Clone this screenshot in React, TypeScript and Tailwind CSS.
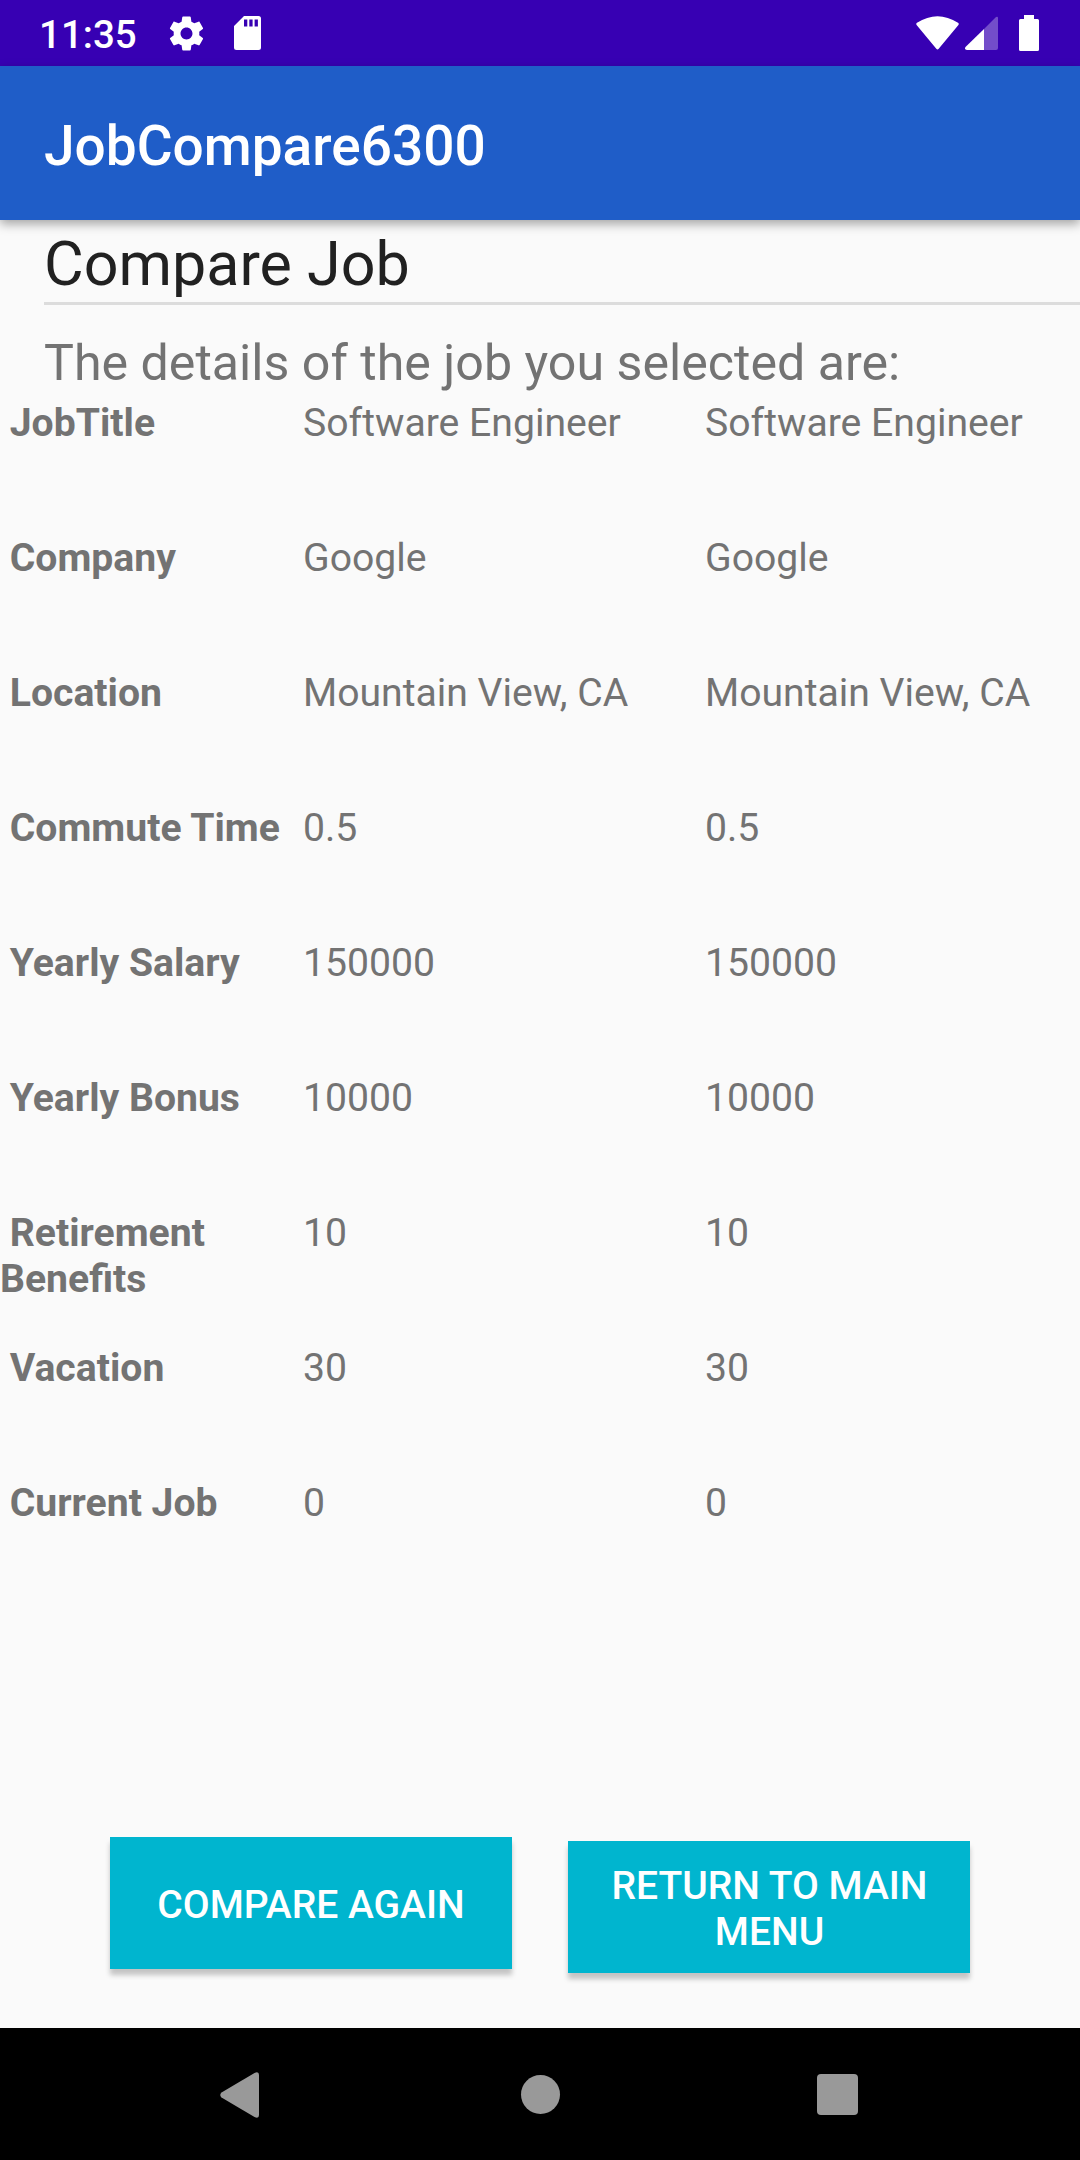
const rows: { label: string; values: [string, string] }[] = [
  { label: "JobTitle", values: ["Software Engineer", "Software Engineer"] },
  { label: "Company", values: ["Google", "Google"] },
  { label: "Location", values: ["Mountain View, CA", "Mountain View, CA"] },
  { label: "Commute Time", values: ["0.5", "0.5"] },
  { label: "Yearly Salary", values: ["150000", "150000"] },
  { label: "Yearly Bonus", values: ["10000", "10000"] },
  { label: "Retirement Benefits", values: ["10", "10"] },
  { label: "Vacation", values: ["30", "30"] },
  { label: "Current Job", values: ["0", "0"] },
];

function StatusBar() {
  return (
    <div className="flex h-[66px] shrink-0 items-center bg-[#3700b3] pr-[41px] pl-[39px] text-white">
      <span className="w-[127px] pt-[3px] text-[38.5px] leading-[46px] font-medium">11:35</span>
      <svg className="size-[41px]" viewBox="0 0 24 24" fill="currentColor">
        <path d="M19.43 12.98c.04-.32.07-.64.07-.98s-.03-.66-.07-.98l2.11-1.65c.19-.15.24-.42.12-.64l-2-3.46c-.12-.22-.39-.3-.61-.22l-2.49 1c-.52-.4-1.08-.73-1.69-.98l-.38-2.65C14.46 2.18 14.25 2 14 2h-4c-.25 0-.46.18-.49.42l-.38 2.65c-.61.25-1.17.59-1.69.98l-2.49-1c-.23-.09-.49 0-.61.22l-2 3.46c-.13.22-.07.49.12.64l2.11 1.65c-.04.32-.07.65-.07.98s.03.66.07.98l-2.11 1.65c-.19.15-.24.42-.12.64l2 3.46c.12.22.39.3.61.22l2.49-1c.52.4 1.08.73 1.69.98l.38 2.65c.03.24.24.42.49.42h4c.25 0 .46-.18.49-.42l.38-2.65c.61-.25 1.17-.59 1.69-.98l2.49 1c.23.09.49 0 .61-.22l2-3.46c.12-.22.07-.49-.12-.64l-2.11-1.65zM12 15.5c-1.93 0-3.5-1.57-3.5-3.5s1.57-3.5 3.5-3.5 3.5 1.57 3.5 3.5-1.57 3.5-3.5 3.5z" />
      </svg>
      <svg className="ml-[27px] h-[34px] w-[27px]" viewBox="0 0 27 34" fill="currentColor">
        <path fillRule="evenodd" d="M10 0H24.5Q27 0 27 2.500V31.500Q27 34 24.500 34H2.500Q0 34 0 31.500V10ZM10 3.500V10.500H13.300V3.500ZM15.300 3.500V10.500H18.600V3.500ZM20.600 3.500V10.500H23.900V3.500Z" />
      </svg>
      <svg className="ml-auto h-[34px] w-[43px]" viewBox="0 0 43 34" fill="currentColor">
        <path d="M1 9.500Q-.5 8 1 6.800Q21.500 -6.500 42 6.800Q43.500 8 42 9.500L22.700 32.800Q21.500 34 20.300 32.800Z" />
      </svg>
      <svg className="ml-[6px] h-[34px] w-[33px]" viewBox="0 0 33 34" fill="currentColor">
        <path opacity=".3" d="M19 13 31 1Q33 0 33 2V32Q33 34 31 34H19Z" />
        <path d="M19 13V34H2Q-1 33.500 .5 31Z" />
      </svg>
      <svg className="ml-[21px] h-[36px] w-[20px]" viewBox="0 0 20 36" fill="currentColor">
        <path d="M5 0H15V4H18.500Q20 4 20 5.500V34.500Q20 36 18.500 36H1.500Q0 36 0 34.500V5.500Q0 4 1.500 4H5Z" />
      </svg>
    </div>
  );
}

function AppBar() {
  return (
    <header className="z-10 flex h-[154px] shrink-0 items-center bg-[#1f5dc8] px-[44px] pt-[5px] shadow-[0_4px_10px_rgba(0,0,0,0.35)]">
      <h1 className="text-[55px] leading-[64px] font-medium text-white">JobCompare6300</h1>
    </header>
  );
}

function NavBar() {
  return (
    <nav className="flex h-[132px] shrink-0 items-center justify-between bg-black pr-[222px] pl-[220px] text-[#999]">
      <svg className="mt-px h-[46px] w-[39px]" viewBox="0 0 39 46" fill="currentColor">
        <path d="M1.500 20.500 34.500 1Q39 -1 39 3V43Q39 47 34.500 45L1.500 25.500Q-1 23 1.500 20.500Z" />
      </svg>
      <span className="mt-px ml-[4px] size-[39px] rounded-full bg-[#999]" />
      <span className="mt-px size-[41px] rounded-[4px] bg-[#999]" />
    </nav>
  );
}

export default function App() {
  return (
    <div className="flex h-[2160px] w-[1080px] flex-col overflow-hidden bg-[#fafafa] font-['Roboto',sans-serif]">
      <StatusBar />
      <AppBar />
      <main className="flex min-h-0 flex-1 flex-col text-[#737373]">
        <div className="ml-[44px] h-[85px] border-b-[3px] border-[#dcdcdc] pt-[9px]">
          <h2 className="text-[61px] leading-[71px] text-[#212121]">Compare Job</h2>
        </div>
        <p className="mt-[27px] ml-[44px] h-[68px] text-[50.15px] leading-[62px]">The details of the job you selected are:</p>
        <div className="text-[39.15px] leading-[46px]">
          {rows.map((row) => (
            <div key={row.label} className="grid h-[135px] grid-cols-[303px_402px_1fr]">
              <span className="font-bold whitespace-pre-wrap">{" " + row.label}</span>
              <span>{row.values[0]}</span>
              <span>{row.values[1]}</span>
            </div>
          ))}
        </div>
        <div className="mt-auto mb-[55px] flex items-end gap-[56px] px-[110px] text-[39px] leading-[46px] font-medium text-white">
          <button className="mb-[4px] h-[132px] w-[402px] bg-[#00b5cf] pt-[3px] shadow-[0_6px_5px_rgba(0,0,0,0.22)]">COMPARE AGAIN</button>
          <button className="h-[132px] w-[402px] bg-[#00b5cf] pt-[3px] pr-[32px] pl-[33px] shadow-[0_6px_5px_rgba(0,0,0,0.22)]">RETURN TO MAIN MENU</button>
        </div>
      </main>
      <NavBar />
    </div>
  );
}
